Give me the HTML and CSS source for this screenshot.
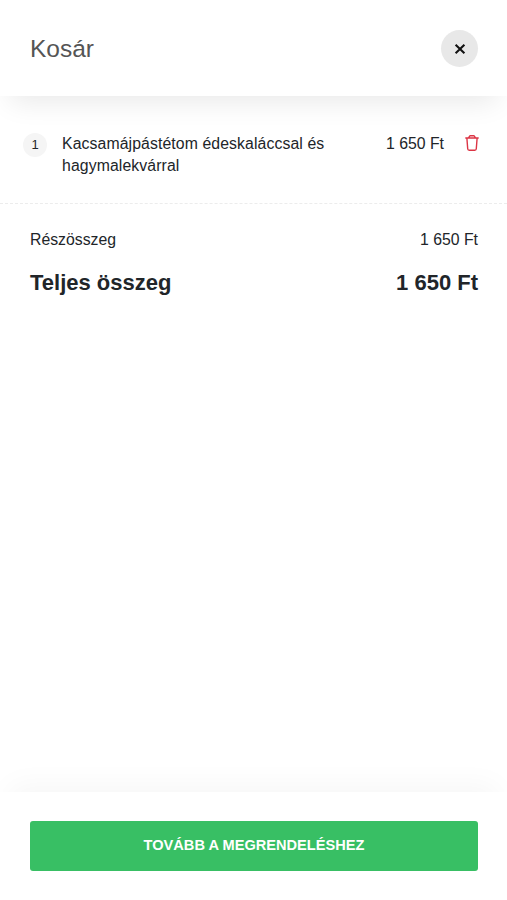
FILE: index.html
```html
<!DOCTYPE html>
<html lang="hu">
<head>
  <meta charset="UTF-8">
  <meta name="viewport" content="width=device-width, initial-scale=1.0">
  <title>Kosár</title>
  <link rel="stylesheet" href="styles.css">
</head>
<body>
  <div class="cart">
    <header class="cart-header">
      <h1>Kosár</h1>
      <button type="button" class="close" aria-label="Bezárás">
        <svg width="12" height="12" viewBox="0 0 12 12"><path d="M1.6 1.8l8.8 8.4M10.4 1.8l-8.8 8.4" stroke="#111" stroke-width="2.1"/></svg>
      </button>
    </header>

    <main class="cart-body">
      <div class="item">
        <span class="qty">1</span>
        <span class="name">Kacsamájpástétom édeskaláccsal és hagymalekvárral</span>
        <span class="price">1 650 Ft</span>
        <button type="button" class="remove" aria-label="Törlés">
          <svg width="14" height="18" viewBox="0 0 14 18" fill="none" stroke="#dc3545" stroke-width="1.4" stroke-linecap="round" stroke-linejoin="round"><path d="M.8 4h12.4M3.6 3.7L4.9 1.8h4.2l1.3 1.9M1.9 4.2l.8 10.6q.1 1.5 1.5 1.5h5.6q1.4 0 1.5-1.5l.8-10.6"/></svg>
        </button>
      </div>

      <div class="summary">
        <div class="row"><span>Részösszeg</span><span>1 650 Ft</span></div>
        <div class="row total"><span>Teljes összeg</span><span>1 650 Ft</span></div>
      </div>
    </main>

    <footer class="cart-footer">
      <button type="button" class="checkout">Tovább a megrendeléshez</button>
    </footer>
  </div>
</body>
</html>
```
FILE: styles.css
```css
* {
  box-sizing: border-box;
}
body {
  margin: 0;
  background: #fff;
  color: #212529;
  font-family: "Liberation Sans", Arial, sans-serif;
  font-size: 15.8px;
  line-height: 22px;
}
button {
  border: none;
  padding: 0;
  font-family: inherit;
  cursor: pointer;
}
svg {
  display: block;
}
.cart {
  display: flex;
  flex-direction: column;
  height: 100vh;
  overflow: hidden;
}
.cart-header {
  display: flex;
  align-items: center;
  justify-content: space-between;
  height: 96px;
  padding: 1px 29px 0 30px;
  background: #fff;
  box-shadow: 0 16px 28px -10px rgba(0, 0, 0, 0.09);
}
h1 {
  margin: 0;
  color: #555;
  font-size: 24.5px;
  font-weight: 400;
}
.close {
  display: flex;
  align-items: center;
  justify-content: center;
  width: 37px;
  height: 37px;
  border-radius: 50%;
  background: #e8e8e8;
}
.cart-body {
  flex: 1;
}
.item {
  display: flex;
  align-items: flex-start;
  height: 108px;
  padding: 37px 28px 0 23px;
  border-bottom: 1px dashed #ececec;
}
.qty {
  width: 24px;
  height: 24px;
  border-radius: 50%;
  background: #f5f5f5;
  font-size: 13px;
  line-height: 23px;
  text-align: center;
}
.name {
  width: 280px;
  margin-left: 15px;
  letter-spacing: 0.1px;
}
.price {
  margin-left: auto;
  white-space: nowrap;
}
.remove {
  margin: 1px 0 0 21px;
  background: none;
}
.summary {
  padding: 25px 29px 0 30px;
}
.row {
  display: flex;
  justify-content: space-between;
}
.total {
  margin-top: 18px;
  font-size: 22px;
  font-weight: 700;
  line-height: 28px;
}
.cart-footer {
  height: 108px;
  padding: 29px 29px 0 30px;
  background: #fff;
  box-shadow: 0 -16px 28px -10px rgba(0, 0, 0, 0.04);
}
.checkout {
  width: 100%;
  height: 50px;
  padding-bottom: 2px;
  border-radius: 3px;
  background: #38bf64;
  color: #fff;
  font-size: 14.6px;
  font-weight: 700;
  text-transform: uppercase;
}
```
